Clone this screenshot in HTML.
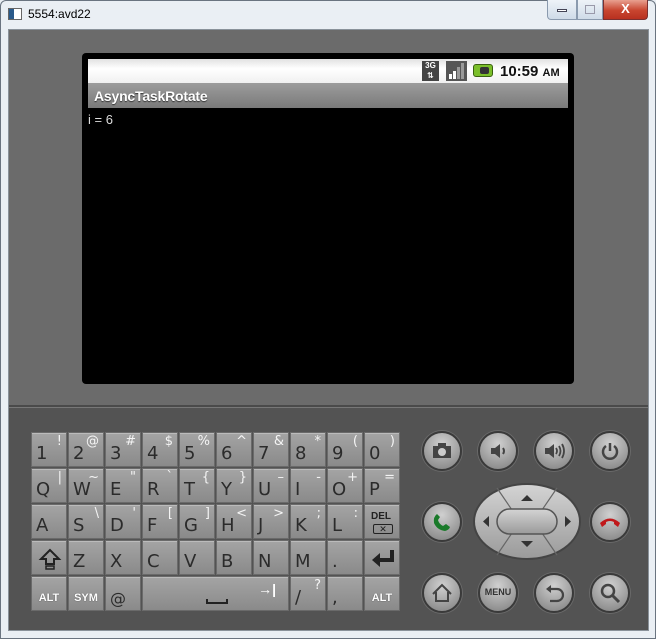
<!DOCTYPE html>
<html><head><meta charset="utf-8"><style>
*{margin:0;padding:0;box-sizing:border-box}
body{width:656px;height:639px;background:#eaeff4;position:relative;overflow:hidden;font-family:"Liberation Sans","DejaVu Sans",sans-serif}
.frame{left:0;top:0;width:656px;height:639px;border:1px solid #6a7480;border-radius:6px 6px 0 0}
.abs{position:absolute}
.title{left:28px;top:7px;font-size:12px;color:#000}
.client{left:8px;top:29px;width:641px;height:602px;background:#6b6b6b;border:1px solid #8a929a}
.lower{left:9px;top:405px;width:639px;height:225px;background:#535353;border-top:2px solid #4a4a4a;box-shadow:inset 0 1px 0 #777}
.bezel{left:82px;top:53px;width:492px;height:331px;background:#000;border-radius:4px}
.status{left:88px;top:59px;width:480px;height:24px;background:linear-gradient(#e2e2e2,#fff 40%,#f0f0f0)}
.appbar{left:88px;top:83px;width:480px;height:25px;background:linear-gradient(#9c9c9c,#7a7a7a);color:#fff;font-weight:bold;font-size:14px;padding:5px 0 0 6px;font-family:"Liberation Sans",sans-serif;text-shadow:0 1px 1px #333;letter-spacing:-0.2px}
.key{position:absolute;width:36px;height:35px;background:linear-gradient(#a4a4a4,#8a8a8a);border:1px solid #6a6a6a;box-shadow:inset 0 1px 0 #bbb}
.key .m{position:absolute;left:4px;bottom:2px;font-size:18px;color:#2b2b2b;font-family:"DejaVu Sans",sans-serif}
.key .s{position:absolute;right:4px;top:1px;font-size:13px;color:#f4f4f4;font-family:"DejaVu Sans",sans-serif}
.key .b{position:absolute;left:0;right:0;bottom:6px;text-align:center;font-size:11px;font-weight:bold;color:#fff;text-shadow:0 0 1px #333}
.btn{position:absolute;width:40px;height:40px;border-radius:50%;background:radial-gradient(circle at 50% 30%,#d0d0d0,#8e8e8e 80%);border:2px solid #3a3a3a;box-shadow:0 0 0 1px #6a6a6a}
.btn svg{position:absolute;left:7px;top:7px}
</style></head><body>
<div class="abs frame"></div>
<div class="abs" style="left:8px;top:8px;width:14px;height:12px;border:1px solid #666;background:linear-gradient(90deg,#2a5a8a 40%,#fff 40%)"></div>
<div class="abs title">5554:avd22</div>
<div class="abs" style="left:547px;top:0;width:30px;height:20px;border:1px solid #8a9aae;border-top:none;border-radius:0 0 0 4px;background:linear-gradient(#eef3f8,#cfdbe8)"><div style="margin:9px auto 0;width:10px;height:3px;background:#fff;border:1px solid #445"></div></div>
<div class="abs" style="left:577px;top:0;width:26px;height:20px;border:1px solid #8a9aae;border-top:none;background:linear-gradient(#eef3f8,#cfdbe8)"><div style="margin:5px auto 0;width:10px;height:9px;border:1px solid #99a"></div></div>
<div class="abs" style="left:603px;top:0;width:45px;height:20px;border:1px solid #7a3030;border-top:none;border-radius:0 0 4px 0;background:linear-gradient(#e8a090,#c8452f 55%,#b83020);color:#fff;font-weight:bold;font-size:13px;text-align:center;line-height:18px">X</div>
<div class="abs client"></div>
<div class="abs lower"></div>
<div class="abs bezel"></div>
<div class="abs status"></div>
<div class="abs" style="left:422px;top:61px;width:17px;height:20px;background:#444;color:#fff;font-size:8px;font-weight:bold;line-height:10px;text-align:center">3G<br>⇅</div>
<div class="abs" style="left:446px;top:61px;width:21px;height:20px;background:#555"><svg width="21" height="20"><rect x="3" y="13" width="3" height="5" fill="#fff"/><rect x="7" y="10" width="3" height="8" fill="#fff"/><rect x="11" y="6" width="3" height="12" fill="#999"/><rect x="15" y="2" width="3" height="16" fill="#999"/></svg></div>
<div class="abs" style="left:473px;top:64px;width:20px;height:13px;background:#7bbf2a;border-radius:3px;border:1px solid #3a6010"><div style="margin:2px 0 0 6px;width:9px;height:7px;background:#333;border-radius:2px"></div></div>
<div class="abs" style="left:500px;top:63px;font-size:15px;font-weight:bold;color:#111">10:59 <span style="font-size:11px">AM</span></div>
<div class="abs appbar">AsyncTaskRotate</div>
<div class="abs" style="left:88px;top:112px;color:#ddd;font-size:13px">i = 6</div>

<div id="kb"></div>
<script>
var rows=[
[["1","!"],["2","@"],["3","#"],["4","$"],["5","%"],["6","^"],["7","&"],["8","*"],["9","("],["0",")"]],
[["Q","|"],["W","~"],["E","\""],["R","`"],["T","{"],["Y","}"],["U","–"],["I","-"],["O","+"],["P","="]],
[["A",""],["S","\\"],["D","'"],["F","["],["G","]"],["H","<"],["J",">"],["K",";"],["L",":"],["#DEL",""]],
[["#SH",""],["Z",""],["X",""],["C",""],["V",""],["B",""],["N",""],["M",""],[".",""],["#ENT",""]],
];
var h="";
for(var r=0;r<4;r++)for(var c=0;c<10;c++){var k=rows[r][c];var x=31+c*37,y=432+r*36;var inner;
if(k[0]=="#DEL")inner='<div style="position:absolute;left:6px;top:6px;font-size:10px;font-weight:bold;color:#222">DEL</div><div style="position:absolute;left:8px;top:19px;width:20px;height:10px;border:1px solid #222;border-radius:2px;font-size:9px;text-align:center;line-height:8px;color:#222">✕</div>';
else if(k[0]=="#SH")inner='<svg style="position:absolute;left:6px;top:6px" width="24" height="24"><path d="M12 3 L3 12 H8 V17 H16 V12 H21 Z" fill="none" stroke="#222" stroke-width="2"/><rect x="8" y="19" width="8" height="3" fill="none" stroke="#222" stroke-width="1.5"/></svg>';
else if(k[0]=="#ENT")inner='<svg style="position:absolute;left:5px;top:7px" width="26" height="22"><path d="M22 2 V12 H8" fill="none" stroke="#222" stroke-width="4"/><path d="M2 12 L10 5 V19 Z" fill="#222"/></svg>';
else inner='<span class="m">'+k[0]+'</span><span class="s">'+k[1]+'</span>';
h+='<div class="key" style="left:'+x+'px;top:'+y+'px">'+inner+'</div>';}
var y=576;
h+='<div class="key" style="left:31px;top:'+y+'px"><div class="b">ALT</div></div>';
h+='<div class="key" style="left:68px;top:'+y+'px"><div class="b">SYM</div></div>';
h+='<div class="key" style="left:105px;top:'+y+'px"><span class="m" style="font-size:16px">@</span></div>';
h+='<div class="key" style="left:142px;top:'+y+'px;width:147px"><div style="position:absolute;right:12px;top:4px;color:#fff;font-size:14px;font-weight:bold">→|</div><div style="position:absolute;left:63px;bottom:6px;width:22px;height:5px;border:2px solid #222;border-top:none"></div></div>';
h+='<div class="key" style="left:290px;top:'+y+'px"><span class="m">/</span><span class="s">?</span></div>';
h+='<div class="key" style="left:327px;top:'+y+'px"><span class="m">,</span></div>';
h+='<div class="key" style="left:364px;top:'+y+'px"><div class="b">ALT</div></div>';
document.getElementById("kb").innerHTML=h;
</script>

<div class="btn" style="left:422px;top:431px"><svg width="22" height="22"><rect x="2" y="6" width="18" height="12" fill="#444"/><rect x="7" y="3" width="8" height="4" fill="#444"/><circle cx="11" cy="12" r="4" fill="#ccc"/></svg></div>
<div class="btn" style="left:478px;top:431px"><svg width="22" height="22"><path d="M4 8 H8 L13 4 V18 L8 14 H4 Z" fill="#444"/><path d="M16 8 Q18 11 16 14" fill="none" stroke="#444" stroke-width="2"/></svg></div>
<div class="btn" style="left:534px;top:431px"><svg width="22" height="22"><path d="M2 8 H6 L11 4 V18 L6 14 H2 Z" fill="#444"/><path d="M13 8 Q15 11 13 14 M16 6 Q19 11 16 16 M19 4 Q23 11 19 18" fill="none" stroke="#444" stroke-width="1.8"/></svg></div>
<div class="btn" style="left:590px;top:431px"><svg width="22" height="22"><path d="M7 6 A7 7 0 1 0 15 6" fill="none" stroke="#444" stroke-width="2.5"/><line x1="11" y1="3" x2="11" y2="11" stroke="#444" stroke-width="2.5"/></svg></div>
<div class="btn" style="left:422px;top:502px"><svg width="22" height="22"><path d="M6 3 Q2 6 3 12 Q6 19 14 20 Q18 19 19 16 L15 13 L12 15 Q8 13 7 9 L9 6 Z" fill="#1a7a2a"/></svg></div>
<div class="btn" style="left:590px;top:502px"><svg width="22" height="22"><path d="M1 12 Q11 3 21 12 L19 16 L15 13 V11 Q11 9 7 11 V13 L3 16 Z" fill="#c0181a"/></svg></div>
<div class="btn" style="left:422px;top:573px"><svg width="22" height="22"><path d="M2 12 L11 3 L20 12 M5 10 V19 H17 V10" fill="none" stroke="#444" stroke-width="2"/></svg></div>
<div class="btn" style="left:478px;top:573px"><div style="position:absolute;left:0;right:0;top:12px;text-align:center;font-size:9px;font-weight:bold;color:#333">MENU</div></div>
<div class="btn" style="left:534px;top:573px"><svg width="22" height="22"><path d="M7 7 H14 A6 6 0 0 1 14 19 H7" fill="none" stroke="#444" stroke-width="2.2"/><path d="M3 7 L8 3 V11 Z" fill="#444"/></svg></div>
<div class="btn" style="left:590px;top:573px"><svg width="22" height="22"><circle cx="9" cy="9" r="6" fill="none" stroke="#444" stroke-width="2.5"/><line x1="13" y1="13" x2="20" y2="20" stroke="#444" stroke-width="3"/></svg></div>

<svg class="abs" style="left:472px;top:482px" width="110" height="79">
<defs><linearGradient id="g" x1="0" y1="0" x2="0" y2="1"><stop offset="0" stop-color="#d4d4d4"/><stop offset="1" stop-color="#9a9a9a"/></linearGradient></defs>
<ellipse cx="55" cy="39.5" rx="53" ry="37.5" fill="url(#g)" stroke="#444" stroke-width="2"/>
<path d="M25 6 L40 28 M85 6 L70 28 M25 73 L40 51 M85 73 L70 51" stroke="#666" stroke-width="1.2"/>
<rect x="25" y="27" width="60" height="25" rx="12.5" fill="url(#g)" stroke="#555" stroke-width="1.5"/>
<path d="M49 19 L55 13 L61 19 Z M49 59 L55 65 L61 59 Z M11 39.5 L17 34 V45 Z M99 39.5 L93 34 V45 Z" fill="#333"/>
</svg>
</body></html>
